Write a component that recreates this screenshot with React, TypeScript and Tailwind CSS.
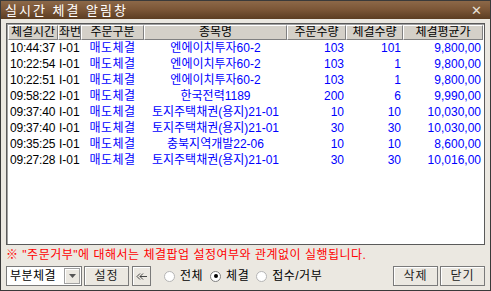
import React from "react";

interface Fill {
  time: string;
  acct: string;
  side: string;
  name: string;
  orderQty: string;
  fillQty: string;
  avgPrice: string;
}

const fills: Fill[] = [
  { time: "10:44:37", acct: "I-01", side: "매도체결", name: "엔에이치투자60-2", orderQty: "103", fillQty: "101", avgPrice: "9,800,00" },
  { time: "10:22:54", acct: "I-01", side: "매도체결", name: "엔에이치투자60-2", orderQty: "103", fillQty: "1", avgPrice: "9,800,00" },
  { time: "10:22:51", acct: "I-01", side: "매도체결", name: "엔에이치투자60-2", orderQty: "103", fillQty: "1", avgPrice: "9,800,00" },
  { time: "09:58:22", acct: "I-01", side: "매도체결", name: "한국전력1189", orderQty: "200", fillQty: "6", avgPrice: "9,990,00" },
  { time: "09:37:40", acct: "I-01", side: "매도체결", name: "토지주택채권(용지)21-01", orderQty: "10", fillQty: "10", avgPrice: "10,030,00" },
  { time: "09:37:40", acct: "I-01", side: "매도체결", name: "토지주택채권(용지)21-01", orderQty: "30", fillQty: "30", avgPrice: "10,030,00" },
  { time: "09:35:25", acct: "I-01", side: "매도체결", name: "충북지역개발22-06", orderQty: "10", fillQty: "10", avgPrice: "8,600,00" },
  { time: "09:27:28", acct: "I-01", side: "매도체결", name: "토지주택채권(용지)21-01", orderQty: "30", fillQty: "30", avgPrice: "10,016,00" },
];

const headers = [
  { label: "체결시간", w: "w-[50px]" },
  { label: "좌번", w: "w-[23px]" },
  { label: "주문구분", w: "w-[63px]" },
  { label: "종목명", w: "w-[143px]" },
  { label: "주문수량", w: "w-[59px]" },
  { label: "체결수량", w: "w-[57px]" },
  { label: "체결평균가", w: "w-[80px]" },
];

function Btn({ children, className = "" }: { children: React.ReactNode; className?: string }) {
  return (
    <div
      className={`h-[20px] flex items-center justify-center border border-[#7a7a7a] bg-[#ebe8e1] shadow-[inset_1px_1px_0_#ffffff] text-[12px] text-[#222] ${className}`}
    >
      {children}
    </div>
  );
}

function Radio({ label, checked = false, faint = false }: { label: string; checked?: boolean; faint?: boolean }) {
  return (
    <div className="flex items-center gap-[5px]">
      <span
        className={`w-[11px] h-[11px] rounded-full border bg-white flex items-center justify-center ${
          faint ? "border-[#b5b5b5]" : "border-[#808080]"
        }`}
      >
        {checked && <span className="w-[4px] h-[4px] rounded-full bg-black" />}
      </span>
      <span className="text-[12px] text-black tracking-[0.5px]">{label}</span>
    </div>
  );
}

export default function App() {
  return (
    <div
      className="w-[491px] h-[291px] flex flex-col bg-[#ebe8e1] border border-[#3a3a3a] overflow-hidden"
      style={{ fontFamily: '"Liberation Sans", "Noto Sans CJK KR", sans-serif' }}
    >
      {/* Title bar */}
      <div className="h-[18px] shrink-0 flex items-center justify-between pl-[4px] pr-[8px] bg-gradient-to-b from-[#8c6848] via-[#7a5536] to-[#5c3d22]">
        <span className="text-[13px] text-white leading-none tracking-[2px]">실시간 체결 알림창</span>
        <span className="text-[13px] text-[#e8e0d8] leading-none">✕</span>
      </div>

      <div className="flex-1 flex flex-col px-[5px] pt-[4px]">
        {/* List */}
        <div className="h-[222px] bg-white border border-[#5a5a5a] shadow-[inset_1px_1px_0_#a0a0a0] flex flex-col pl-[1px]">
          <div className="flex h-[15px] mt-[1px]">
            {headers.map((h) => (
              <div
                key={h.label}
                className={`${h.w} shrink-0 bg-[#d4d0c8] border-t border-l border-t-white border-l-white border-r border-b border-r-[#808080] border-b-[#808080] text-[12px] leading-[13px] text-black text-center overflow-hidden whitespace-nowrap`}
              >
                {h.label}
              </div>
            ))}
          </div>
          {fills.map((f, i) => (
            <div key={i} className="flex h-[16px] items-center text-[12px] leading-[16px] whitespace-nowrap">
              <div className="w-[51px] shrink-0 pl-[2px] text-black tracking-[-0.2px]">{f.time}</div>
              <div className="w-[22px] shrink-0 text-black overflow-visible">{f.acct}</div>
              <div className="w-[63px] shrink-0 text-center text-[#0000ff] tracking-[0.5px]">{f.side}</div>
              <div className="w-[143px] shrink-0 text-center text-[#0000ff]">{f.name}</div>
              <div className="w-[59px] shrink-0 text-right pr-[2px] text-[#0000ff]">{f.orderQty}</div>
              <div className="w-[57px] shrink-0 text-right pr-[2px] text-[#0000ff]">{f.fillQty}</div>
              <div className="w-[80px] shrink-0 text-right pr-[2px] text-[#0000ff]">{f.avgPrice}</div>
            </div>
          ))}
        </div>

        {/* Notice */}
        <div className="mt-[2px] h-[16px] text-[12px] leading-[16px] text-[#ff0000] whitespace-nowrap tracking-[0.5px]">
          ※ "주문거부"에 대해서는 체결팝업 설정여부와 관계없이 실행됩니다.
        </div>

        {/* Controls */}
        <div className="mt-[3px] flex items-center">
          <div className="w-[76px] h-[20px] bg-white border border-[#7a7a7a] flex items-center justify-between pl-[3px] pr-[1px]">
            <span className="text-[12px] text-black tracking-[0.5px]">부분체결</span>
            <span className="w-[16px] h-[16px] bg-[#ebe8e1] border border-[#a0a0a0] shadow-[inset_1px_1px_0_#ffffff] flex items-center justify-center">
              <svg width="7" height="4" viewBox="0 0 7 4">
                <path d="M0 0h7L3.5 4z" fill="#555" />
              </svg>
            </span>
          </div>
          <Btn className="w-[45px] ml-[2px] tracking-[1px]">설정</Btn>
          <Btn className="w-[19px] ml-[3px]">
            <svg width="11" height="7" viewBox="0 0 11 7">
              <path d="M4 0.5L1 3.5L4 6.5M7 0.5L4 3.5L7 6.5M4 3.5H11" fill="none" stroke="#333" strokeWidth="0.9" />
            </svg>
          </Btn>
          <div className="flex items-center gap-[7px] ml-[13px]">
            <Radio label="전체" faint />
            <Radio label="체결" checked />
            <Radio label="접수/거부" faint />
          </div>
          <div className="flex-1" />
          <Btn className="w-[45px] tracking-[1px]">삭제</Btn>
          <Btn className="w-[45px] ml-[2px] tracking-[1px]">닫기</Btn>
        </div>
      </div>
    </div>
  );
}
